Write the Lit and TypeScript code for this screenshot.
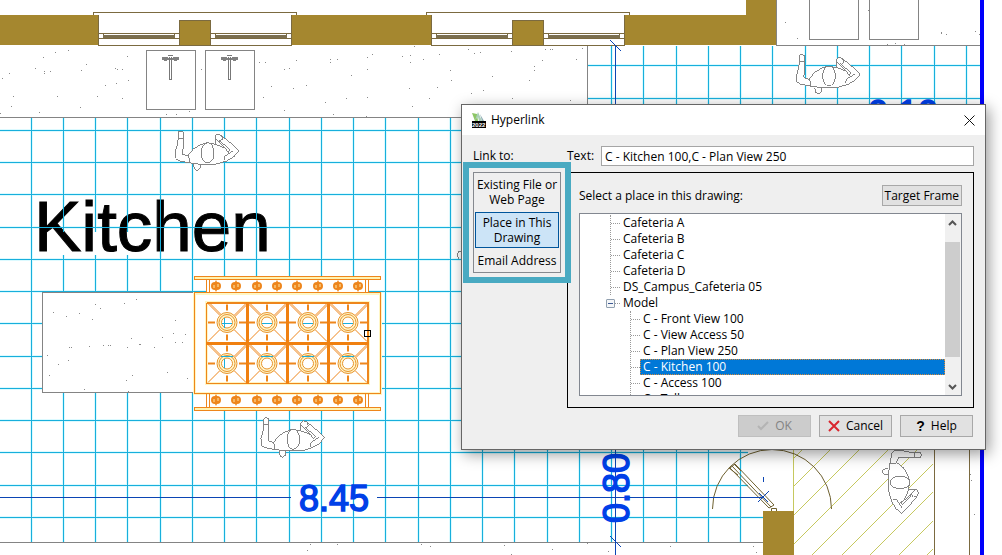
import { LitElement, html, svg, css } from "lit";
import { customElement, state } from "lit/decorators.js";
import { classMap } from "lit/directives/class-map.js";

const leftVerticals = [31, 160, 192, 224, 256, 289, 321, 353, 385, 418, 450, 482, 514, 547, 579, 611, 643, 676, 708, 740];
const brokenVerticals = [63, 95, 127];
const leftHorizontals = [130, 162, 194, 227, 259, 291, 323, 356, 388, 420, 452, 485, 517];
const rightVerticals = [611, 643, 676, 708, 740, 772, 805, 837, 869, 901, 934, 966];
const rightHorizontals = [65, 98];

const gridPath = [
  ...leftVerticals.map((x) => `M${x}.5 117V542`),
  ...brokenVerticals.map((x) => `M${x}.5 117V232M${x}.5 255V542`),
  ...leftHorizontals.map((y) => `M0 ${y}.5H${y === 517 ? 763 : 748}`),
  ...rightVerticals.map((x) => `M${x}.5 46V117`),
  ...rightHorizontals.map((y) => `M588 ${y}.5H980`),
].join("");

const specks: number[][] = [
  [2, 78], [9, 73], [11, 106], [13, 96], [0, 113], [39, 112], [35, 68], [43, 57], [44, 71], [44, 73], [50, 71],
  [55, 52], [68, 50], [57, 96], [81, 70], [86, 64], [80, 107], [105, 85], [97, 96], [116, 83], [115, 68], [117, 69],
  [122, 69], [127, 56], [128, 80], [122, 98], [166, 114], [176, 114], [189, 111], [201, 69], [259, 62], [265, 62],
  [284, 69], [289, 68], [271, 86], [293, 88], [263, 97], [284, 110], [296, 60], [306, 85], [330, 59], [330, 62],
  [337, 59], [351, 75], [367, 69], [372, 54], [367, 57], [402, 56], [410, 55], [410, 62], [423, 59], [409, 88],
  [414, 46], [439, 54], [450, 70], [451, 80], [437, 87], [429, 98], [412, 106], [325, 102], [346, 98], [367, 97],
  [333, 114], [366, 116], [468, 49], [474, 53], [480, 52], [492, 76], [511, 51], [483, 90], [471, 93], [529, 80],
  [534, 66], [534, 70], [542, 60], [545, 49], [550, 49], [552, 49], [576, 59], [582, 48], [512, 98], [570, 100],
  [785, 22], [797, 38], [868, 10], [941, 32], [941, 33], [946, 34], [975, 31], [979, 34], [887, 44], [895, 43], [904, 44],
  [53, 312], [66, 316], [79, 313], [95, 304], [100, 308], [92, 319], [124, 303], [136, 299], [175, 320], [173, 333],
  [185, 334], [162, 337], [175, 342], [182, 342], [69, 347], [71, 347], [89, 346], [103, 345], [108, 345], [110, 345],
  [127, 347], [131, 338], [139, 344], [140, 344], [154, 347], [47, 355], [58, 364], [68, 360], [49, 375], [84, 389],
  [132, 375], [126, 380], [128, 391], [167, 372], [187, 378],
  [307, 550], [310, 544], [337, 544], [421, 544], [430, 546], [504, 545], [511, 554], [552, 549], [587, 543],
  [608, 551], [670, 546], [753, 546], [756, 552], [970, 474], [971, 480], [974, 514],
];
const speckPath = specks.map(([x, y]) => `M${x} ${y}h1v1h-1z`).join("");

const knobXs = [216, 236, 257, 277, 297, 318, 338, 358];
const burners = [322, 363].flatMap((y) => [227, 267, 308, 348].map((x) => [x, y]));

const person = () => svg`
  <path class="fill" d="M535 415V396L541 393L550 397V440L547 462L563 468L580 447L600 435L620 428L646 433V408L653 402L665 407L700 436L716 453L702 470L680 483L650 492L600 493L565 488L535 482L527 475L526 455L531 438Z" />
  <path d="M535 415H550M568 488V475L563 468M646 433L664 439L672 444M647 415L672 440L685 458M657 420L690 450L682 456M664 407L668 417L657 426M673 480L675 468L700 452" />
  <path class="fill" d="M580 493L584 508L592 512L601 504V494" />
  <ellipse class="fill" cx="623" cy="458" rx="19" ry="30" />`;

const windowUnit = () => svg`
  <path class="frame" d="M93.5 15V12.5H296.5V15M98.5 15V45.5H291.5V15M99 33.5H179M99 38.5H179M211 33.5H291M211 38.5H291M103.5 33V39M174.5 33V39M215.5 33V39M286.5 33V39" />
  <path class="pane" d="M103 36H175M215 36H287" />
  <rect class="pier" x="179.5" y="20.5" width="31" height="25" />`;

const sink = () => svg`
  <rect class="gray-box" x="146.5" y="50.5" width="49" height="59" />
  <path class="tap-fill" d="M162 57h6v1h5v-1h6v3h-2v1h-3v-1h-7v1h-3v-1h-2z" />
  <path class="tap" d="M169.500 57V79.500H171.500V57M168 55.500h5" />`;

const leaves: string[] = ["Cafeteria A", "Cafeteria B", "Cafeteria C", "Cafeteria D", "DS_Campus_Cafeteria 05"];
const views: string[] = ["C - Front View 100", "C - View Access 50", "C - Plan View 250", "C - Kitchen 100", "C - Access 100", "C - Tall"];

@customElement("floor-plan")
export class FloorPlan extends LitElement {
  static styles = css`
    :host { display: block; height: 100%; }
    svg { display: block; width: 100%; height: 100%; background: #fff; }
    path, rect, ellipse, circle { fill: none; stroke-width: 1; }
    .crisp { shape-rendering: crispEdges; }
    .glow { stroke: #dcfaff; stroke-width: 3; }
    .grid { stroke: #18afdc; }
    .wall { fill: #a5872f; }
    .frame { stroke: #7b6a40; }
    .pane { stroke: #7b6f50; stroke-width: 3; }
    .pier { fill: #a5872f; stroke: #7b6a40; }
    .gray { stroke: #848484; }
    .gray-box { stroke: #848484; fill: #fff; }
    .tap { stroke: #777; }
    .tap-fill { fill: #808080; }
    .specks { fill: #8a8a8a; }
    .blank { fill: #fff; }
    .people { stroke: #858585; }
    .people path, .people ellipse { stroke-width: 3; }
    .people .fill { fill: #fff; }
    .dim { stroke: #0b45b4; }
    .boundary { fill: #0000fb; }
    .name { font: 71px "Liberation Sans", Arial, sans-serif; fill: #000; stroke: #000; stroke-width: 1; }
    .measure { font: 36px "Liberation Sans", Arial, sans-serif; fill: #0040e8; stroke: #0040e8; stroke-width: 1.5; }
    .halo { stroke: #fff6c4; stroke-width: 3; }
    .stove { stroke: #ee861c; }
    .rail { stroke: #ee861c; fill: #fff3b0; }
    .bar { stroke: #f08010; stroke-width: 3; }
    .arm { stroke: #ee861c; stroke-width: 2; }
    .ring { stroke: #e8942c; fill: #fff6cc; }
    .hole { stroke: #e8942c; fill: #fff; }
    .knob { fill: #ee861c; }
    .slot { stroke: #ffe9a8; }
    .hatch { stroke: #c6c85e; }
    .door { stroke: #6f6130; }
    .grip { stroke: #000; fill: none; }
  `;

  render() {
    return html`<svg viewBox="0 0 1002 555" preserveAspectRatio="xMinYMin slice" role="img" aria-label="Kitchen floor plan">
      <defs>
        <clipPath id="hatch-area"><rect x="793" y="449" width="141" height="106" /></clipPath>
      </defs>
      <path class="glow crisp" d=${gridPath} />
      <text class="name" x="34" y="251">Kitchen</text>
      <g class="crisp">
        <path class="grid" d=${gridPath} />
        <path class="gray" d="M0 117.500H587.500V46M776.500 0V45.500H980M0 542.500H763" />
        <rect class="wall" x="0" y="15" width="98" height="30" />
        <rect class="wall" x="292" y="15" width="139" height="30" />
        <path class="wall" d="M625 15H746V0H776V45H625Z" />
        ${windowUnit()}
        <g transform="translate(333 0)">${windowUnit()}</g>
        ${sink()}
        <g transform="translate(59 0)">${sink()}</g>
        <path class="gray-box" d="M809.500 0V39.500H858.500V0M869.500 0V39.500H918.500V0" />
        <rect class="gray-box" x="42.500" y="292.500" width="152" height="100" />
        <path class="gray" d="M459 259q-3-4 0-8h3" />
      </g>

      <rect class="blank" x="206" y="277" width="163" height="133" />
      <rect class="blank" x="195" y="293" width="185" height="101" />
      <path class="halo" d="M194.500 293.500H380.500V393.500H194.500ZM206.500 302.500H368.500V383.500H206.500Z" />
      <g class="crisp">
        <rect class="rail" x="194.500" y="276.500" width="186" height="3" />
        <rect class="rail" x="194.500" y="407.500" width="186" height="3" />
        <path class="rail" d="M206.500 280V292M209.500 280V292M365.500 280V292M368.500 280V292M206.500 394V407M209.500 394V407M365.500 394V407M368.500 394V407" />
        <path class="stove" d="M194.500 292.500H380.500V393.500H194.500ZM206.500 303.500H368.500V383.500H206.500ZM206.500 302.500H368.500M367.500 303V383" />
        <path class="bar" d="M247 302V384M287.500 302V384M328 302V384M206 343.500H369" />
      </g>
      ${burners.map(([x, y]) => svg`<g transform="translate(${x} ${y + 0.5})">
        <path class="stove" d="M-19-19L-7-7M19-19L7-7M-19 19L-7 7M19 19L7 7M-18-20L-6-8M20-18L8-6" />
        <path class="arm" d="M0-18V-12M0 12V18M-19 0H-12M12 0H19" />
        <circle class="ring" r="10" /><circle class="ring" r="8" /><circle class="hole" r="5.500" />
      </g>`)}
      <path class="grid crisp" d="M222 323.500h10M224.500 318v10M262 323.500h10M303 323.500h10M343 323.500h10M224.500 359v9M221 356.500h12M261 356.500h12M302 356.500h12M342 356.500h12" />
      ${[286, 400].map((y) => knobXs.map((x) => svg`<g transform="translate(${x} ${y})">
        <path class="knob" d="M0-6L1-4A4 4 0 0 1 1 4L0 6L-1 4A4 4 0 0 1-1-4Z" />
        <path class="slot" d="M-2-1V2M2-2V1" />
      </g>`))}
      <rect class="grip crisp" x="364.500" y="330.500" width="6" height="6" />

      <path class="specks crisp" d=${speckPath} />

      <g clip-path="url(#hatch-area)">
        <path class="hatch" d=${[172, 200, 229, 258, 287, 317, 345, 374, 402].map((s) => `M793 ${s - 172 + 459}L933 ${s - 172 + 319}`).join("")} />
      </g>
      <path class="hatch crisp" d="M793.500 449V512" />
      <path class="frame crisp" d="M934.500 449V555M969.500 449V555" />
      <path class="door" d="M712.500 509A59.500 59.500 0 0 1 831.500 509" />
      <path class="door" d="M730 468L735 464L774 505L769 508ZM732 466L771 507M729 468L738 475M734 464L741 471M771.500 508.500h5v4h-5z" />
      <rect class="wall" x="763" y="511" width="31" height="44" />

      <g class="people crisp">
        <g transform="scale(.33333)">${person()}</g>
        <g transform="scale(.33333) translate(1864 -230)">${person()}</g>
        <g transform="scale(.33333) translate(257 860)">${person()}</g>
        <g transform="scale(.33333) translate(3158 824) rotate(90)">${person()}</g>
      </g>

      <rect class="boundary" x="980" y="0" width="4" height="555" />
      <path class="dim crisp" d="M615.500 45V555M0 497.500H291M377 497.500H763M763.500 477v5" />
      <path class="dim" d="M610 40L621 51M610 536L621 547M758 502L769 491M759 493L768 502" />
      <text class="measure" x="299" y="511">8.45</text>
      <text class="measure" x="868" y="126">0.10</text>
      <text class="measure" transform="translate(629 523) rotate(-90)">0.80</text>
    </svg>`;
  }
}

@customElement("hyperlink-dialog")
export class HyperlinkDialog extends LitElement {
  @state() private target = 1;
  @state() private selected = 3;

  static styles = css`
    :host {
      display: block;
      box-sizing: border-box;
      border: 1px solid #666;
      background: #efefef;
      box-shadow: 3px 4px 14px rgba(0, 0, 0, 0.4);
      font: 12px/16px "Open Sans", "Noto Sans", sans-serif;
      color: #000;
    }
    * { box-sizing: border-box; }
    button, input { font: inherit; color: inherit; margin: 0; }
    svg { display: block; flex: none; }
    .title { display: flex; align-items: center; gap: 5px; height: 30px; padding: 0 9px; background: #fff; }
    h1 { flex: 1; margin: 0; font: inherit; }
    .close { display: grid; place-items: center; width: 13px; height: 20px; padding: 0; border: 0; background: none; }
    .body { display: grid; grid-template-columns: 88px 1fr; gap: 6px; padding: 11px 11px 7px; }
    .field { display: flex; align-items: center; gap: 7px; }
    .field input { flex: 1; min-width: 0; height: 20px; padding: 0 3px; border: 1px solid #a5a5a5; background: #fff; }
    .caption { align-self: center; }
    .targets { position: relative; align-self: start; display: flex; flex-direction: column; gap: 2px; padding: 1px; border: 1px solid #85898f; }
    .targets::after { content: ""; position: absolute; inset: -11px; border: 6px solid #49aac2; pointer-events: none; }
    .targets button { display: flex; flex-direction: column; align-items: center; justify-content: center; min-height: 20px; padding: 2px 0; border: 1px solid transparent; background: none; line-height: 15px; white-space: nowrap; }
    .targets button.on { border-color: #00559b; background: #cce4f7; }
    .panel { display: flex; flex-direction: column; gap: 7px; padding: 12px 11px 11px; border: 1px solid #000; }
    .head { display: flex; align-items: center; justify-content: space-between; }
    .push { display: flex; align-items: center; justify-content: center; height: 21px; padding: 0 2px; border: 1px solid #a8a8a8; background: #e1e1e1; white-space: nowrap; }
    .list { display: flex; height: 183px; border: 1px solid #828790; background: #fff; overflow: hidden; }
    .tree { flex: 1; min-width: 0; margin: 0; padding: 1px 0 0 26px; }
    .tree ul { margin: 0; padding: 0 0 0 20px; list-style: none; }
    .row { display: grid; grid-template-columns: 14px 1fr; height: 16px; }
    .twig { display: grid; align-items: center; }
    .twig::after { content: ""; margin-left: 0; border-top: 1px dotted #999; }
    .branch { margin-left: 4px; border-left: 1px dotted #999; }
    .branch .row { grid-template-columns: 9px 1fr; }
    .expander { display: grid; place-items: center; width: 9px; height: 9px; padding: 0; border: 1px solid #91a0b0; border-radius: 1px; background: #f4f6f8; }
    .expander::after { content: ""; width: 5px; border-top: 1px solid #3d5a94; }
    .fork { display: flex; align-items: center; }
    .fork::after { content: ""; width: 5px; border-top: 1px dotted #999; }
    .label { padding: 0 3px; white-space: nowrap; cursor: default; line-height: 16px; }
    .label.on { background: #0078d7; color: #fff; outline: 1px dotted #d58a3c; outline-offset: -1px; }
    .scroll { display: grid; grid-template-rows: 28px 115px 1fr; width: 16px; padding-right: 1px; background: #f0f0f0; color: #555; justify-items: center; }
    .scroll svg:first-child { align-self: start; margin-top: 6px; }
    .scroll svg:last-child { align-self: end; margin-bottom: 5px; }
    .thumb { width: 15px; background: #cdcdcd; }
    .actions { display: flex; justify-content: flex-end; gap: 8px; padding: 0 12px 12px; }
    .actions .push { width: 73px; height: 22px; gap: 6px; }
    .actions .push:disabled { background: #cccccc; border-color: #bfbfbf; color: #838383; }
    .query { font: bold 14px "Liberation Sans", sans-serif; }
    .year { font: bold 6px "Liberation Sans", sans-serif; fill: #fff; }
  `;

  render() {
    const targets = [["Existing File or", "Web Page"], ["Place in This", "Drawing"], ["Email Address"]];
    return html`
      <div class="title">
        <svg width="15" height="17" viewBox="0 0 15 17" aria-hidden="true">
          <path d="M1 1L6 2L7 9H4Z" fill="#8cc665" /><path d="M4 8L7 0L11 9H8L7 5Z" fill="#a9cfb8" /><path d="M9 2L13 9H11Z" fill="#8faeb4" />
          <rect x="1" y="9" width="14" height="7" fill="#000" />
          <text class="year" x="1" y="15">2022</text>
        </svg>
        <h1>Hyperlink</h1>
        <button class="close" aria-label="Close">
          <svg width="11" height="11" viewBox="0 0 11 11"><path d="M.5 .5L10.500 10.500M10.500 .5L.5 10.500" stroke="#111" fill="none" /></svg>
        </button>
      </div>
      <div class="body">
        <span class="caption" id="link-to">Link to:</span>
        <div class="field"><label for="text">Text:</label><input id="text" type="text" value="C - Kitchen 100,C - Plan View 250" /></div>
        <div class="targets" role="group" aria-labelledby="link-to">
          ${targets.map((lines, i) => html`<button class=${classMap({ on: i === this.target })} aria-pressed=${i === this.target} @click=${() => (this.target = i)}>${lines.map((line) => html`<span>${line} </span>`)}</button>`)}
        </div>
        <section class="panel">
          <div class="head"><span id="pick">Select a place in this drawing:</span><button class="push">Target Frame</button></div>
          <div class="list">
            <div class="tree" role="tree" aria-labelledby="pick">
              <div class="branch">
                ${leaves.map((name) => html`<div class="row"><span class="twig"></span><span class="label" role="treeitem">${name}</span></div>`)}
              </div>
              <div class="row">
                <span class="fork"><button class="expander" aria-label="Collapse Model"></button></span>
                <span class="label" role="treeitem" aria-expanded="true">Model</span>
              </div>
              <ul role="group">
                <li class="branch" role="none">
                  ${views.map((name, i) => html`<div class="row"><span class="twig"></span><span class=${classMap({ label: true, on: i === this.selected })} role="treeitem" aria-selected=${i === this.selected} @click=${() => (this.selected = i)}>${name}</span></div>`)}
                </li>
              </ul>
            </div>
            <div class="scroll" aria-hidden="true">
              <svg width="9" height="6" viewBox="0 0 9 6"><path d="M1 5L4.500 1.500L8 5" stroke="currentColor" stroke-width="2" fill="none" /></svg>
              <span class="thumb"></span>
              <svg width="9" height="6" viewBox="0 0 9 6"><path d="M1 1L4.500 4.500L8 1" stroke="currentColor" stroke-width="2" fill="none" /></svg>
            </div>
          </div>
        </section>
      </div>
      <div class="actions">
        <button class="push" disabled><svg width="12" height="10" viewBox="0 0 12 10"><path d="M1 5L4 8L11 1" stroke="#b4b4b4" stroke-width="2" fill="none" /></svg>OK</button>
        <button class="push"><svg width="12" height="12" viewBox="0 0 12 12"><path d="M1 1L11 11M11 1L1 11" stroke="#d9262e" stroke-width="2" fill="none" /></svg>Cancel</button>
        <button class="push"><span class="query" aria-hidden="true">?</span>Help</button>
      </div>`;
  }
}

@customElement("app-root")
export class AppRoot extends LitElement {
  static styles = css`
    :host { display: block; position: relative; height: 100vh; overflow: hidden; background: #fff; }
    .window { position: absolute; left: 461px; top: 104px; width: 525px; }
  `;

  render() {
    return html`<floor-plan></floor-plan><hyperlink-dialog class="window"></hyperlink-dialog>`;
  }
}
